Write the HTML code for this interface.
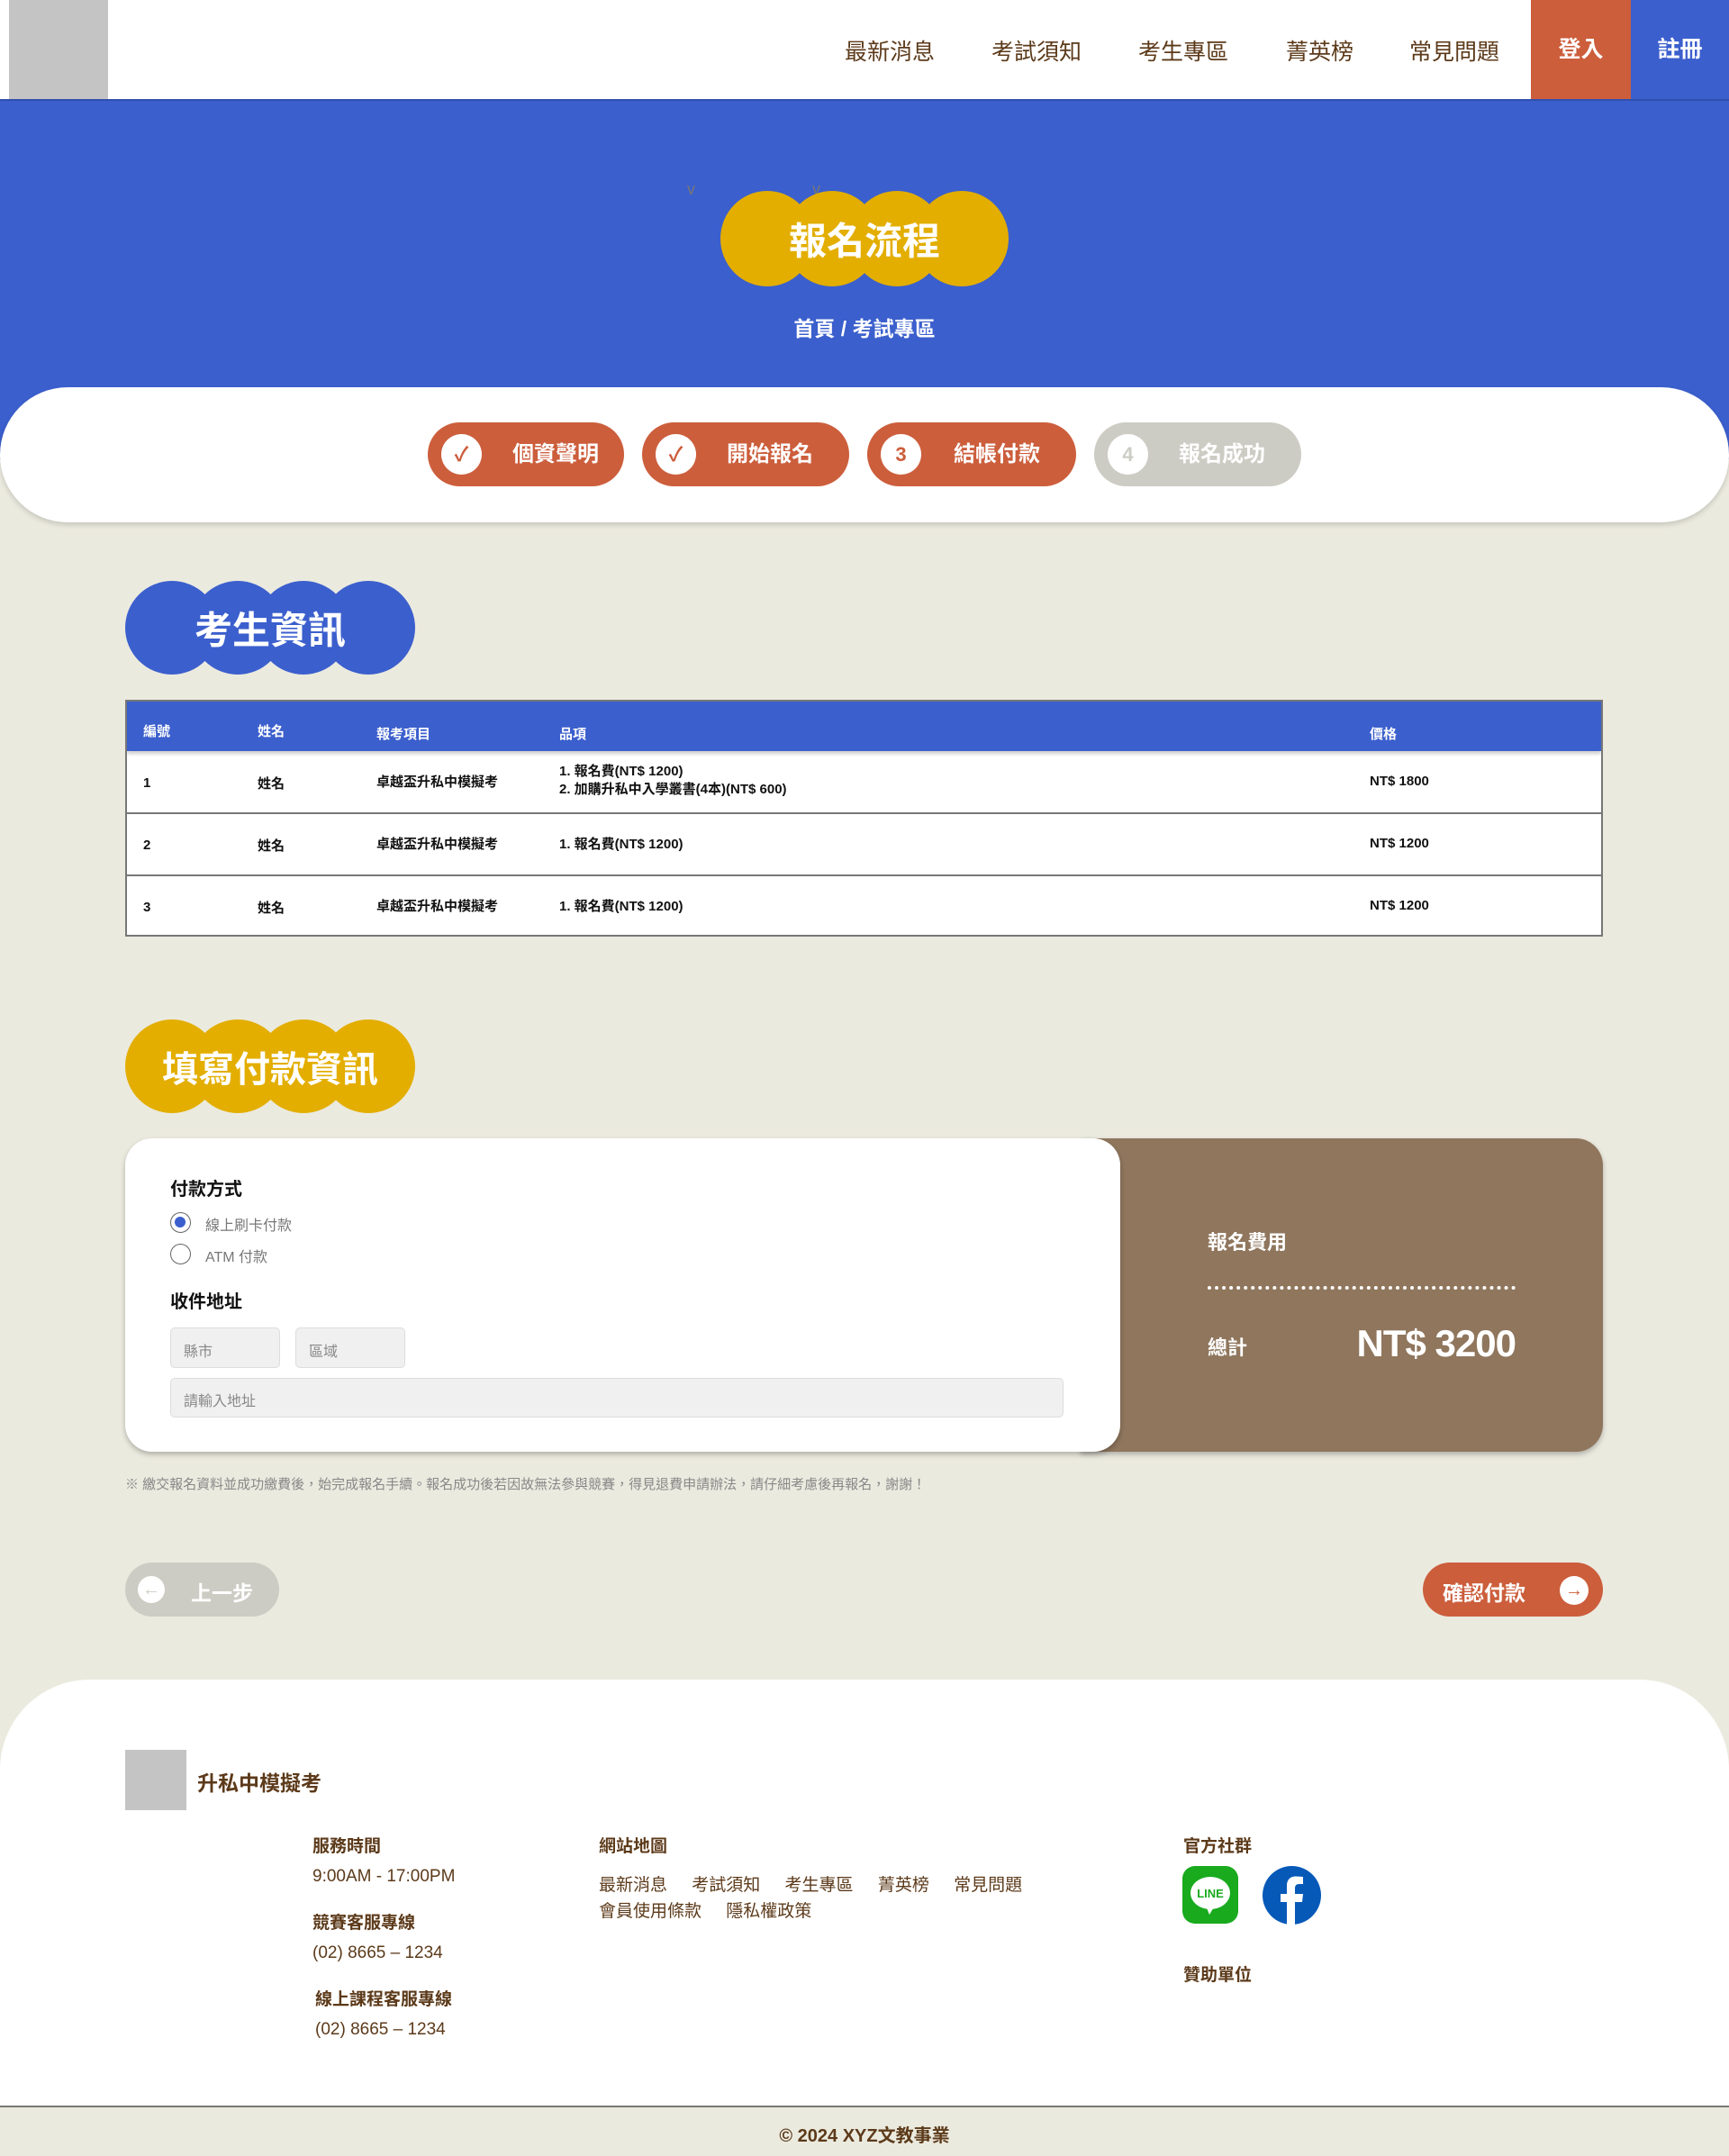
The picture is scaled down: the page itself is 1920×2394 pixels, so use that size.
<!DOCTYPE html>
<html><head><meta charset="utf-8">
<style>
*{margin:0;padding:0;box-sizing:border-box}
body{width:1920px;height:2394px;background:#EBEADF;font-family:"Liberation Sans","Noto Sans CJK TC",sans-serif;position:relative;overflow:hidden;color:#5C3A1A}
.a{position:absolute}
.nav{font-size:25px;color:#5C3A1A;top:38px}
.blob{position:absolute}
.blob i{position:absolute;top:0;width:104px;height:100%;border-radius:50%}
.blob span{position:absolute;left:0;right:0;top:50%;transform:translateY(-50%);text-align:center;color:#fff;font-weight:bold;z-index:2}
.step{position:absolute;top:469px;height:71px;border-radius:36px;background:#CC5E3C;color:#fff;font-weight:bold;font-size:24px}
.step .c{position:absolute;left:15px;top:13px;width:45px;height:45px;border-radius:50%;background:#fff;color:#CC5E3C;text-align:center;line-height:45px;font-size:22px}
.step .t{position:absolute;right:40px;top:0;line-height:71px}
.th{background:#3B5FCD;color:#fff;font-size:15px;font-weight:bold}
.row{background:#fff;border-top:2px solid #777;font-size:15px;font-weight:bold;color:#111}
.f{font-size:19px;color:#5C3A1A}
.fb{font-size:19px;font-weight:bold;color:#5C3A1A}
</style></head><body>
<div class="a" style="left:0;top:0;width:1920px;height:110px;background:#fff"></div>
<div class="a" style="left:10px;top:0;width:110px;height:110px;background:#C4C4C4"></div>
<div class="a nav" style="left:938px">最新消息</div>
<div class="a nav" style="left:1101px">考試須知</div>
<div class="a nav" style="left:1264px">考生專區</div>
<div class="a nav" style="left:1428px">菁英榜</div>
<div class="a nav" style="left:1565px">常見問題</div>
<div class="a" style="left:1700px;top:0;width:111px;height:110px;background:#CC5E3C;color:#fff;font-size:25px;font-weight:bold;text-align:center;line-height:110px">登入</div>
<div class="a" style="left:1811px;top:0;width:109px;height:110px;background:#3B5FCD;color:#fff;font-size:25px;font-weight:bold;text-align:center;line-height:110px">註冊</div>
<div class="a" style="left:0;top:110px;width:1920px;height:400px;background:#3B5FCD;border-top:2px solid #2f4fae"></div>
<div class="a" style="left:763px;top:200px;color:#777;font-size:18px">v</div>
<div class="a" style="left:902px;top:200px;color:#777;font-size:18px">v</div>
<div class="blob" style="left:800px;top:212px;width:320px;height:106px">
<i style="left:0;background:#E3AE00"></i><i style="left:72px;background:#E3AE00"></i><i style="left:144px;background:#E3AE00"></i><i style="left:216px;background:#E3AE00"></i>
<span style="font-size:42px">報名流程</span></div>
<div class="a" style="left:0;width:1920px;top:346px;text-align:center;color:#fff;font-size:23px;font-weight:bold">首頁 / 考試專區</div>
<div class="a" style="left:0;top:430px;width:1920px;height:150px;background:#fff;border-radius:75px;box-shadow:0 3px 6px rgba(0,0,0,.15)"></div>
<div class="step" style="left:475px;width:218px"><div class="c">✓</div><div class="t" style="right:28px">個資聲明</div></div>
<div class="step" style="left:713px;width:230px"><div class="c">✓</div><div class="t">開始報名</div></div>
<div class="step" style="left:963px;width:232px"><div class="c" style="font-weight:bold">3</div><div class="t">結帳付款</div></div>
<div class="step" style="left:1215px;width:230px;background:#CDCCC4"><div class="c" style="color:#CDCCC4">4</div><div class="t">報名成功</div></div>
<div class="blob" style="left:139px;top:645px;width:322px;height:104px">
<i style="left:0;background:#3B5FCD"></i><i style="left:73px;background:#3B5FCD"></i><i style="left:146px;background:#3B5FCD"></i><i style="left:218px;background:#3B5FCD"></i>
<span style="font-size:42px">考生資訊</span></div>
<div class="a" style="left:139px;top:777px;width:1641px;height:263px;border:2px solid #777;background:#fff;overflow:hidden">
<div class="th a" style="left:0;top:0;width:100%;height:55px;box-shadow:0 3px 4px rgba(0,0,0,.2);z-index:2">
<div class="a" style="left:18px;top:22px">編號</div><div class="a" style="left:145px;top:22px">姓名</div><div class="a" style="left:277px;top:25px">報考項目</div><div class="a" style="left:480px;top:25px">品項</div><div class="a" style="left:1380px;top:25px">價格</div></div>
<div class="row a" style="left:0;top:55px;width:100%;height:68px;border-top:none">
<div class="a" style="left:18px;top:27px">1</div><div class="a" style="left:145px;top:25px">姓名</div><div class="a" style="left:277px;top:23px">卓越盃升私中模擬考</div><div class="a" style="left:480px;top:13px;line-height:20px">1. 報名費(NT$ 1200)<br>2. 加購升私中入學叢書(4本)(NT$ 600)</div><div class="a" style="left:1380px;top:25px">NT$ 1800</div></div>
<div class="row a" style="left:0;top:123px;width:100%;height:69px">
<div class="a" style="left:18px;top:26px">2</div><div class="a" style="left:145px;top:24px">姓名</div><div class="a" style="left:277px;top:22px">卓越盃升私中模擬考</div><div class="a" style="left:480px;top:22px">1. 報名費(NT$ 1200)</div><div class="a" style="left:1380px;top:24px">NT$ 1200</div></div>
<div class="row a" style="left:0;top:192px;width:100%;height:67px">
<div class="a" style="left:18px;top:26px">3</div><div class="a" style="left:145px;top:24px">姓名</div><div class="a" style="left:277px;top:22px">卓越盃升私中模擬考</div><div class="a" style="left:480px;top:22px">1. 報名費(NT$ 1200)</div><div class="a" style="left:1380px;top:24px">NT$ 1200</div></div>
</div>
<div class="blob" style="left:139px;top:1132px;width:322px;height:104px">
<i style="left:0;background:#E3AE00"></i><i style="left:73px;background:#E3AE00"></i><i style="left:146px;background:#E3AE00"></i><i style="left:218px;background:#E3AE00"></i>
<span style="font-size:40px">填寫付款資訊</span></div>
<div class="a" style="left:1200px;top:1264px;width:580px;height:348px;background:#8F765D;border-radius:0 30px 30px 0;box-shadow:0 3px 6px rgba(0,0,0,.25)"></div>
<div class="a" style="left:139px;top:1264px;width:1105px;height:348px;background:#fff;border-radius:30px;box-shadow:0 3px 6px rgba(0,0,0,.25)"></div>
<div class="a" style="left:189px;top:1304px;font-size:20px;font-weight:bold;color:#111">付款方式</div>
<div class="a" style="left:189px;top:1346px;width:23px;height:23px;border:1.5px solid #666;border-radius:50%"><div style="margin:4px;width:12px;height:12px;border-radius:50%;background:#3B5FCD"></div></div>
<div class="a" style="left:228px;top:1347px;font-size:16px;color:#777">線上刷卡付款</div>
<div class="a" style="left:189px;top:1381px;width:23px;height:23px;border:1.5px solid #666;border-radius:50%"></div>
<div class="a" style="left:228px;top:1382px;font-size:16px;color:#777">ATM 付款</div>
<div class="a" style="left:189px;top:1429px;font-size:20px;font-weight:bold;color:#111">收件地址</div>
<div class="a" style="left:189px;top:1474px;width:122px;height:45px;background:#F0F0F0;border:1.5px solid #ddd;border-radius:5px;font-size:16px;color:#888;padding:12px 14px">縣市</div>
<div class="a" style="left:328px;top:1474px;width:122px;height:45px;background:#F0F0F0;border:1.5px solid #ddd;border-radius:5px;font-size:16px;color:#888;padding:12px 14px">區域</div>
<div class="a" style="left:189px;top:1530px;width:992px;height:44px;background:#F0F0F0;border:1.5px solid #ddd;border-radius:5px;font-size:16px;color:#888;padding:11px 14px">請輸入地址</div>
<div class="a" style="left:1341px;top:1362px;font-size:22px;font-weight:bold;color:#fff">報名費用</div>
<div class="a" style="left:1341px;top:1428px;width:342px;border-top:4px dotted #fff"></div>
<div class="a" style="left:1341px;top:1479px;font-size:22px;font-weight:bold;color:#fff">總計</div>
<div class="a" style="left:1400px;width:283px;text-align:right;top:1468px;font-size:42px;font-weight:bold;color:#fff;letter-spacing:-1px">NT$ 3200</div>
<div class="a" style="left:139px;top:1637px;font-size:15px;color:#888">※ 繳交報名資料並成功繳費後，始完成報名手續。報名成功後若因故無法參與競賽，得見退費申請辦法，請仔細考慮後再報名，謝謝！</div>
<div class="a" style="left:139px;top:1735px;width:171px;height:60px;border-radius:30px;background:#CDCCC4"><div class="a" style="left:14px;top:15px;width:30px;height:30px;border-radius:50%;background:#fff;color:#CDCCC4;text-align:center;line-height:30px;font-weight:bold;font-size:20px">←</div><div class="a" style="left:73px;top:15px;color:#fff;font-weight:bold;font-size:23px">上一步</div></div>
<div class="a" style="left:1580px;top:1735px;width:200px;height:60px;border-radius:30px;background:#CC5E3C"><div class="a" style="left:22px;top:15px;color:#fff;font-weight:bold;font-size:23px">確認付款</div><div class="a" style="left:152px;top:15px;width:32px;height:32px;border-radius:50%;background:#fff;color:#CC5E3C;text-align:center;line-height:32px;font-weight:bold;font-size:20px">→</div></div>
<div class="a" style="left:0;top:1865px;width:1920px;height:520px;background:#fff;border-radius:100px 100px 0 0"></div>
<div class="a" style="left:0;top:2338px;width:1920px;height:56px;background:#EBEADF;border-top:2px solid #777"></div>
<div class="a" style="left:0;width:1920px;top:2355px;text-align:center;font-size:20px;font-weight:bold;color:#5C3A1A">© 2024 XYZ文教事業</div>
<div class="a" style="left:139px;top:1943px;width:68px;height:67px;background:#C4C4C4"></div>
<div class="a" style="left:219px;top:1961px;font-size:23px;font-weight:bold">升私中模擬考</div>
<div class="a fb" style="left:347px;top:2035px">服務時間</div>
<div class="a f" style="left:347px;top:2073px">9:00AM - 17:00PM</div>
<div class="a fb" style="left:347px;top:2120px">競賽客服專線</div>
<div class="a f" style="left:347px;top:2158px">(02) 8665 – 1234</div>
<div class="a fb" style="left:350px;top:2205px">線上課程客服專線</div>
<div class="a f" style="left:350px;top:2243px">(02) 8665 – 1234</div>
<div class="a fb" style="left:665px;top:2035px">網站地圖</div>
<div class="a f" style="left:665px;top:2078px;word-spacing:22px">最新消息 考試須知 考生專區 菁英榜 常見問題</div>
<div class="a f" style="left:665px;top:2107px;word-spacing:22px">會員使用條款 隱私權政策</div>
<div class="a fb" style="left:1314px;top:2035px">官方社群</div>
<svg class="a" style="left:1313px;top:2072px" width="62" height="64" viewBox="0 0 62 64"><rect width="62" height="64" rx="14" fill="#19AA1E"/><ellipse cx="31" cy="30" rx="22" ry="18" fill="#fff"/><path d="M26 44 L30 54 L36 44Z" fill="#fff"/><text x="31" y="35" font-size="13" font-weight="bold" fill="#19AA1E" text-anchor="middle" font-family="Liberation Sans">LINE</text></svg>
<svg class="a" style="left:1402px;top:2072px" width="65" height="65" viewBox="0 0 65 65"><circle cx="32.5" cy="32.5" r="32.5" fill="#0759B8"/><path d="M36 65 V40 H44 L45 31 H36 V25 C36 22 37 20 41 20 H45 V12 C43 12 40 11.5 37 11.5 C30 11.5 27 16 27 22 V31 H20 V40 H27 V65Z" fill="#fff"/></svg>
<div class="a fb" style="left:1314px;top:2178px">贊助單位</div>
</body></html>
